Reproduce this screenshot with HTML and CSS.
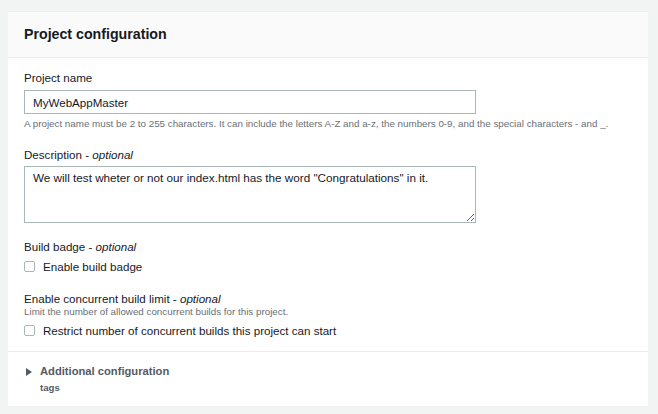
FILE: index.html
```html
<!DOCTYPE html>
<html lang="en">
<head>
<meta charset="utf-8">
<title>Project configuration</title>
<link rel="stylesheet" href="styles.css">
</head>
<body>
<section class="card">
  <header class="card-header">
    <h2 class="card-title">Project configuration</h2>
  </header>
  <div class="card-body">
    <label class="label" for="pname">Project name</label>
    <input class="input gap-input" id="pname" type="text" value="MyWebAppMaster">
    <p class="hint gap-hint">A project name must be 2 to 255 characters. It can include the letters A-Z and a-z, the numbers 0-9, and the special characters - and _.</p>

    <label class="label gap-field" for="pdesc">Description - <i>optional</i></label>
    <textarea class="textarea gap-area" id="pdesc">We will test wheter or not our index.html has the word "Congratulations" in it.</textarea>

    <div class="label gap-field2">Build badge - <i>optional</i></div>
    <label class="check-row gap-row"><span class="checkbox"></span><span>Enable build badge</span></label>

    <div class="label gap-field3">Enable concurrent build limit - <i>optional</i></div>
    <p class="hint">Limit the number of allowed concurrent builds for this project.</p>
    <label class="check-row gap-row"><span class="checkbox"></span><span>Restrict number of concurrent builds this project can start</span></label>
  </div>
  <div class="card-footer">
    <div class="expander"><span class="caret"></span><span>Additional configuration</span></div>
    <div class="expander-sub">tags</div>
  </div>
</section>
</body>
</html>
```
FILE: styles.css
```css
html, body {
  background: #f2f3f3;
}
body {
  margin: 11px 10px 0 8px;
  font-family: "Liberation Sans", Arial, sans-serif;
  color: #16191f;
}
.card {
  background: #ffffff;
  border-top: 1px solid #eaeded;
  box-shadow: 0 1px 1px 0 rgba(0, 28, 36, 0.3), 1px 1px 1px 0 rgba(0, 28, 36, 0.15), -1px 1px 1px 0 rgba(0, 28, 36, 0.15);
}
.card-header {
  background: #fafafa;
  border-bottom: 1px solid #eaeded;
  height: 45px;
  padding: 0 16px;
}
.card-title {
  margin: 0;
  font-size: 14.2px;
  line-height: 45px;
  font-weight: 700;
  color: #16191f;
}
.card-body {
  display: flex;
  flex-direction: column;
  align-items: flex-start;
  padding: 12px 16px 13px;
}
.label {
  font-size: 11.6px;
  line-height: 15px;
  color: #16191f;
}
.label i {
  font-style: italic;
}
.hint {
  margin: 0;
  font-size: 9.8px;
  line-height: 12px;
  color: #687078;
}
.input, .textarea {
  box-sizing: border-box;
  width: 452px;
  border: 1px solid #aab7b8;
  border-radius: 0;
  font-family: "Liberation Sans", Arial, sans-serif;
  font-size: 11.6px;
  color: #16191f;
  background: #fff;
  margin: 0;
}
.input {
  height: 24px;
  padding: 0 8px;
}
.textarea {
  height: 57px;
  padding: 3px 8px;
  line-height: 16px;
  font-size: 11.7px;
  resize: vertical;
}
.gap-input { margin-top: 5px; }
.gap-hint { margin-top: 4px; }
.gap-field { margin-top: 17px; }
.gap-area { margin-top: 4px; }
.gap-field2 { margin-top: 16px; }
.gap-row { margin-top: 5px; }
.gap-field3 { margin-top: 17px; }
.check-row {
  display: flex;
  align-items: center;
  gap: 8px;
  font-size: 11.6px;
  line-height: 15px;
  color: #16191f;
}
.checkbox {
  box-sizing: border-box;
  width: 11px;
  height: 11px;
  border: 1px solid #aab7b8;
  border-radius: 2px;
  background: #fff;
}
.card-footer {
  border-top: 1px solid #eaeded;
  padding: 12px 16px 12px;
}
.expander {
  display: flex;
  align-items: center;
  font-size: 11.2px;
  line-height: 15px;
  font-weight: 700;
  color: #545b64;
}
.caret {
  width: 0;
  height: 0;
  border-left: 6px solid #545b64;
  border-top: 4px solid transparent;
  border-bottom: 4px solid transparent;
  margin-left: 2px;
  margin-right: 8px;
}
.expander-sub {
  margin-top: 3px;
  margin-left: 16px;
  font-size: 9.6px;
  line-height: 12px;
  font-weight: 700;
  color: #545b64;
}
```
